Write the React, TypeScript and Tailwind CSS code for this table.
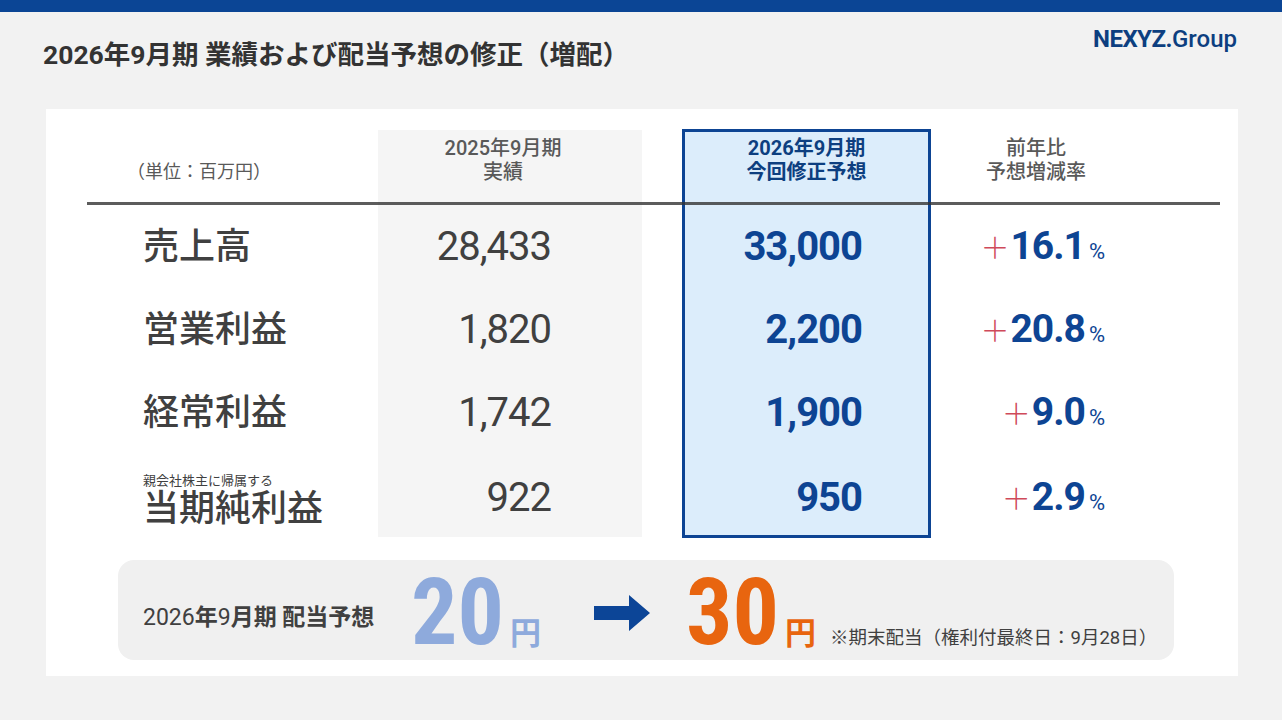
import React from "react";

const F = { fontFamily: "Roboto, 'Noto Sans CJK JP', sans-serif" };
const NARROW = { fontFamily: "'Liberation Sans Narrow', 'Roboto Condensed', Roboto, sans-serif" };

const rows = [
  { label: "売上高", prev: "28,433", next: "33,000", pct: "16.1" },
  { label: "営業利益", prev: "1,820", next: "2,200", pct: "20.8" },
  { label: "経常利益", prev: "1,742", next: "1,900", pct: "9.0" },
];

function Arrow() {
  return (
    <svg width="56" height="36" viewBox="0 0 56 36" className="shrink-0">
      <polygon points="0,11 35,11 35,0 56,18 35,36 35,25 0,25" fill="#0c4597" />
    </svg>
  );
}

function Pct({ v }: { v: string }) {
  return (
    <div className="flex items-baseline text-[#0d4493]">
      <span
        className="text-[29px] font-light text-[#cf4a5a] leading-none mr-[1px]"
        style={{ fontFamily: "'Noto Sans CJK JP', sans-serif" }}
      >
        ＋
      </span>
      <span className="text-[39px] font-bold leading-none tracking-[-1px]">{v}</span>
      <span className="text-[22px] leading-none ml-[4px]">%</span>
    </div>
  );
}

export default function App() {
  return (
    <div className="w-[1282px] h-[720px] bg-[#f2f2f2] flex flex-col overflow-hidden" style={F}>
      <div className="h-[12px] bg-[#0b4595] shrink-0" />
      <div className="h-[97px] shrink-0 flex justify-between items-start pl-[43px] pr-[45px]">
        <div className="pt-[25px] text-[26.5px] leading-[36px] font-bold text-[#333333] whitespace-nowrap">
          2026年9月期 業績および配当予想の修正（増配）
        </div>
        <div className="pt-[12px] text-[24px] leading-[30px] text-[#0d3f80] whitespace-nowrap">
          <span className="font-bold tracking-[-0.5px]">NEXYZ.</span>
          <span className="font-medium">Group</span>
        </div>
      </div>
      <div className="ml-[46px] w-[1192px] h-[567px] bg-white flex flex-col shrink-0">
        <div className="pt-[21px] pl-[41px]">
          <div className="grid grid-cols-[291px_264px_40px_249px_289px] grid-rows-[72px_3px_83px_83px_83px_83px]">
            <div className="col-start-2 row-start-1 row-end-7 bg-[#f5f5f5]" />
            <div className="col-start-4 row-start-1 row-end-7 -my-px border-[3px] border-[#0d4493] bg-[#dcedfb]" />
            <div className="col-start-1 col-end-6 row-start-2 bg-[#333333]/80" />

            <div className="col-start-1 row-start-1 pt-[30px] pl-[40px] text-[18px] leading-[24px] text-[#595959]">
              （単位：百万円）
            </div>
            <div className="col-start-2 row-start-1 pt-[6px] pr-[14px] text-center text-[20px] leading-[24px] font-medium text-[#595959]">
              2025年9月期
              <br />
              実績
            </div>
            <div className="col-start-4 row-start-1 pt-[6px] text-center text-[20px] leading-[24px] font-bold text-[#0d3f80]">
              2026年9月期
              <br />
              今回修正予想
            </div>
            <div className="col-start-5 row-start-1 pt-[6px] pr-[79px] text-center text-[20px] leading-[24px] font-medium text-[#595959]">
              前年比
              <br />
              予想増減率
            </div>

            {rows.map((r, i) => (
              <React.Fragment key={r.label}>
                <div
                  className="col-start-1 flex items-center pl-[56px] text-[36px] leading-none font-medium text-[#404040]"
                  style={{ gridRowStart: i + 3 }}
                >
                  {r.label}
                </div>
                <div
                  className="col-start-2 flex items-center justify-end pr-[91px] text-[40px] leading-none tracking-[-1px] text-[#404040]"
                  style={{ gridRowStart: i + 3 }}
                >
                  {r.prev}
                </div>
                <div
                  className="col-start-4 flex items-center justify-end pr-[69px] text-[40px] leading-none font-bold tracking-[-1px] text-[#0d4493]"
                  style={{ gridRowStart: i + 3 }}
                >
                  {r.next}
                </div>
                <div
                  className="col-start-5 flex items-center justify-end pr-[115px]"
                  style={{ gridRowStart: i + 3 }}
                >
                  <Pct v={r.pct} />
                </div>
              </React.Fragment>
            ))}

            <div className="col-start-1 row-start-6 flex flex-col pt-[19px] pl-[56px] text-[#404040]">
              <div className="text-[13px] leading-[16px]">親会社株主に帰属する</div>
              <div className="text-[36px] leading-[40px] font-medium">当期純利益</div>
            </div>
            <div className="col-start-2 row-start-6 flex items-center justify-end pt-[4px] pr-[91px] text-[40px] leading-none tracking-[-1px] text-[#404040]">
              922
            </div>
            <div className="col-start-4 row-start-6 flex items-center justify-end pt-[4px] pr-[69px] text-[40px] leading-none font-bold tracking-[-1px] text-[#0d4493]">
              950
            </div>
            <div className="col-start-5 row-start-6 flex items-center justify-end pt-[4px] pr-[115px]">
              <Pct v="2.9" />
            </div>
          </div>
        </div>

        <div className="ml-[72px] mt-[23px] w-[1056px] h-[100px] rounded-[16px] bg-[#f0f0f0] flex items-center pt-[6px] pl-[25px]">
          <div className="mt-[8px] text-[23px] leading-none text-[#404040] whitespace-nowrap w-[268px]">
            <span>2026</span>
            <span className="font-bold">年</span>
            <span>9</span>
            <span className="font-bold">月期 配当予想</span>
          </div>
          <div className="flex items-baseline text-[#8eaadc] w-[183px]">
            <span className="text-[92px] leading-none font-bold" style={NARROW}>
              20
            </span>
            <span className="ml-[6px] text-[31px] leading-none font-bold">円</span>
          </div>
          <Arrow />
          <div className="ml-[36px] flex items-baseline">
            <span className="text-[92px] leading-none font-bold text-[#e8650f]" style={NARROW}>
              30
            </span>
            <span className="ml-[6px] text-[31px] leading-none font-bold text-[#e8650f]">円</span>
            <span className="ml-[14px] text-[18.5px] leading-none text-[#404040] whitespace-nowrap">
              ※期末配当（権利付最終日：9月28日）
            </span>
          </div>
        </div>
      </div>
    </div>
  );
}
